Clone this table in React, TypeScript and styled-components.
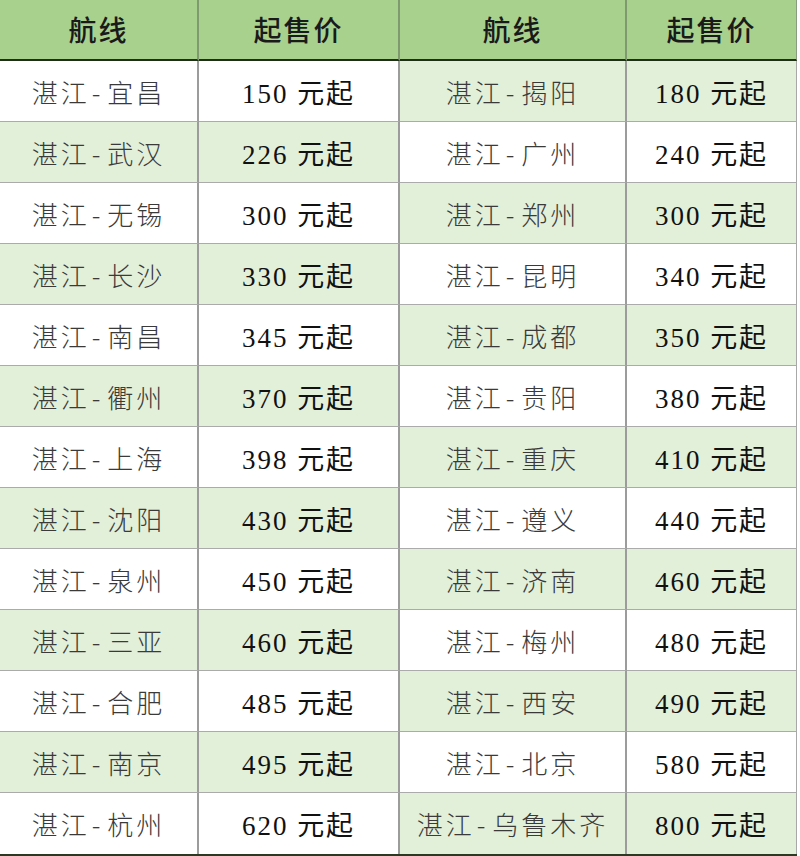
import React from "react";
import styled, { createGlobalStyle } from "styled-components";

const Global = createGlobalStyle`
  html, body { margin: 0; padding: 0; background: #ffffff; }
  body { font-family: "Noto Sans CJK SC", sans-serif; }
`;

const Table = styled.div`
  width: 797px;
  display: grid;
  grid-template-columns: 199px 201px 227px 170px;
  grid-template-rows: 61px;
  grid-auto-rows: 61px;
  border-bottom: 2px solid #2a3a22;
`;

const HeadCell = styled.div<{ $last?: boolean }>`
  box-sizing: border-box;
  background: #a9d18e;
  border-right: ${(p) => (p.$last ? "1px solid #8a9c80" : "2px solid #7f9a70")};
  border-bottom: 2px solid #1f2e18;
  display: flex;
  align-items: center;
  justify-content: center;
  font-family: "Noto Sans CJK SC", sans-serif;
  font-weight: 500;
  font-size: 28px;
  letter-spacing: 2px;
  color: #1a1a1a;
  padding-bottom: 1px;
`;

const Cell = styled.div<{ $band: boolean; $last?: boolean; $noLine?: boolean }>`
  box-sizing: border-box;
  background: ${(p) => (p.$band ? "#e2efd9" : "#ffffff")};
  border-right: ${(p) => (p.$last ? "1px solid #a8a8a8" : "2px solid #9c9c9c")};
  border-bottom: ${(p) => (p.$noLine ? "0" : "1px solid #ababab")};
  display: flex;
  align-items: center;
  justify-content: center;
`;

const Route = styled.span`
  font-family: "Noto Sans CJK SC", sans-serif;
  font-weight: 300;
  font-size: 26px;
  letter-spacing: 3px;
  color: #3a3a3a;
  white-space: nowrap;
`;

const Dash = styled.span`
  margin: 0 4px 0 2px;
`;

const Price = styled.span`
  white-space: pre;
  font-size: 27px;
  letter-spacing: 2px;
  color: #111111;
`;

const Num = styled.span`
  font-family: "Liberation Serif", "Times New Roman", "DejaVu Serif", serif;
  font-weight: 400;
`;

const Unit = styled.span`
  font-family: "Noto Sans CJK SC", sans-serif;
  font-weight: 400;
  color: #111111;
`;

const left: [string, number][] = [
  ["宜昌", 150],
  ["武汉", 226],
  ["无锡", 300],
  ["长沙", 330],
  ["南昌", 345],
  ["衢州", 370],
  ["上海", 398],
  ["沈阳", 430],
  ["泉州", 450],
  ["三亚", 460],
  ["合肥", 485],
  ["南京", 495],
  ["杭州", 620],
];

const right: [string, number][] = [
  ["揭阳", 180],
  ["广州", 240],
  ["郑州", 300],
  ["昆明", 340],
  ["成都", 350],
  ["贵阳", 380],
  ["重庆", 410],
  ["遵义", 440],
  ["济南", 460],
  ["梅州", 480],
  ["西安", 490],
  ["北京", 580],
  ["乌鲁木齐", 800],
];

function RouteText({ city }: { city: string }) {
  return (
    <Route>
      湛江<Dash>-</Dash>
      {city}
    </Route>
  );
}

function PriceText({ value }: { value: number }) {
  return (
    <Price>
      <Num>{value} </Num>
      <Unit>元起</Unit>
    </Price>
  );
}

export default function App() {
  return (
    <>
      <Global />
      <Table>
        <HeadCell>航线</HeadCell>
        <HeadCell>起售价</HeadCell>
        <HeadCell>航线</HeadCell>
        <HeadCell $last>起售价</HeadCell>
        {left.map((l, i) => {
          const r = right[i];
          const leftBand = i % 2 === 1;
          const rightBand = !leftBand;
          const noLine = i === left.length - 1;
          return (
            <React.Fragment key={i}>
              <Cell $band={leftBand} $noLine={noLine}>
                <RouteText city={l[0]} />
              </Cell>
              <Cell $band={leftBand} $noLine={noLine}>
                <PriceText value={l[1]} />
              </Cell>
              <Cell $band={rightBand} $noLine={noLine}>
                <RouteText city={r[0]} />
              </Cell>
              <Cell $band={rightBand} $last $noLine={noLine}>
                <PriceText value={r[1]} />
              </Cell>
            </React.Fragment>
          );
        })}
      </Table>
    </>
  );
}
